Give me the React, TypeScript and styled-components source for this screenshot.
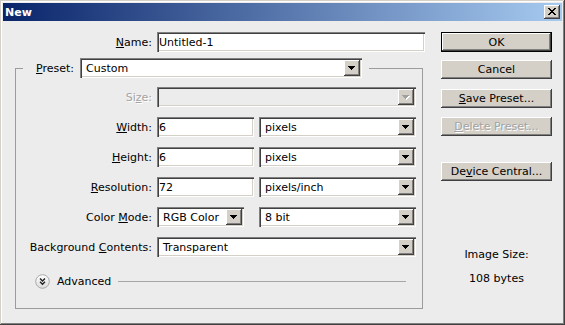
import React from 'react';
import styled, { createGlobalStyle, css } from 'styled-components';

const Global = createGlobalStyle`
  html, body { margin: 0; padding: 0; background: #ececec; }
  body { font-family: "DejaVu Sans", Tahoma, sans-serif; font-size: 11px; color: #000; }
  * { box-sizing: border-box; }
`;

const bevelRaised = css`
  box-shadow: inset -1px -1px #404040, inset 1px 1px #fff, inset -2px -2px #808080, inset 2px 2px #d4d0c8;
`;
const bevelSunken = css`
  box-shadow: inset 1px 1px #808080, inset 2px 2px #404040, inset -1px -1px #fff, inset -2px -2px #d4d0c8;
`;

const Window = styled.div`
  width: 565px;
  height: 325px;
  padding: 3px;
  background: #ececec;
  box-shadow: inset -1px -1px #404040, inset 1px 1px #d4d0c8, inset -2px -2px #808080, inset 2px 2px #fff;
  display: flex;
  flex-direction: column;
`;

const TitleBar = styled.div`
  height: 18px;
  flex: none;
  background: linear-gradient(to right, #0a246a, #a6caf0);
  display: flex;
  align-items: center;
  justify-content: space-between;
  padding: 0 2px 0 2px;
`;

const Title = styled.span`
  color: #fff;
  font-weight: bold;
  font-size: 11px;
`;

const CloseBtn = styled.div`
  width: 16px;
  height: 14px;
  background: #d4d0c8;
  ${bevelRaised};
  display: flex;
  align-items: center;
  justify-content: center;
  padding-bottom: 1px;
`;

const Body = styled.div`
  flex: 1;
  display: flex;
`;

const LeftCol = styled.div`
  width: 427px;
  padding-top: 11px;
  display: flex;
  flex-direction: column;
`;

const NameRow = styled.div`
  display: grid;
  grid-template-columns: 149px 268px;
  column-gap: 5px;
  align-items: center;
`;

const Label = styled.label<{ $disabled?: boolean }>`
  text-align: right;
  white-space: nowrap;
  color: ${p => (p.$disabled ? '#a3a3a3' : '#000')};
  text-shadow: ${p => (p.$disabled ? '1px 1px 0 #fff' : 'none')};
`;

const TextInput = styled.input<{ $w: number }>`
  width: ${p => p.$w}px;
  height: 20px;
  border: none;
  outline: none;
  margin: 0;
  padding: 2px 0 2px 2px;
  font: inherit;
  color: #000;
  background: #fff;
  ${bevelSunken};
`;

const SelectBox = styled.div<{ $w: number; $disabled?: boolean }>`
  width: ${p => p.$w}px;
  height: 20px;
  padding: 2px;
  display: flex;
  align-items: center;
  background: ${p => (p.$disabled ? '#ececec' : '#fff')};
  ${bevelSunken};
`;

const SelectValue = styled.span`
  flex: 1;
  padding-left: 4px;
  white-space: nowrap;
  overflow: hidden;
`;

const DropBtn = styled.span`
  width: 16px;
  height: 16px;
  flex: none;
  background: #d4d0c8;
  ${bevelRaised};
  display: flex;
  align-items: center;
  justify-content: center;
`;

const Group = styled.fieldset`
  margin: 6px 0 0 12px;
  padding: 0 0 19px 0;
  width: 408px;
  min-width: 0;
  border: 1px solid #9c9c9c;
`;

const Legend = styled.legend`
  margin-left: 7px;
  padding: 0 7px 0 13px;
  height: 20px;
`;

const LegendInner = styled.div`
  display: flex;
  align-items: center;
  gap: 6px;
  height: 20px;
`;

const FormGrid = styled.div`
  display: grid;
  grid-template-columns: 136px auto;
  column-gap: 5px;
  row-gap: 10px;
  margin-top: 9px;
  align-items: center;
`;

const Pair = styled.div`
  display: flex;
  justify-content: space-between;
  width: 259px;
`;

const AdvancedRow = styled.div`
  display: flex;
  align-items: center;
  height: 15px;
  margin: 17px 16px 0 19px;
  gap: 7px;
`;

const Rule = styled.div`
  flex: 1;
  height: 1px;
  background: #a6a6a6;
`;

const RightCol = styled.div`
  width: 111px;
  margin-left: 11px;
  padding-top: 11px;
  display: flex;
  flex-direction: column;
`;

const Button = styled.div<{ $default?: boolean; $disabled?: boolean; $mt?: number }>`
  height: ${p => (p.$default ? 20 : 19)}px;
  margin-top: ${p => p.$mt ?? 0}px;
  background: #d4d0c8;
  display: flex;
  align-items: center;
  justify-content: center;
  white-space: nowrap;
  color: ${p => (p.$disabled ? '#a3a3a3' : '#000')};
  text-shadow: ${p => (p.$disabled ? '1px 1px 0 #fff' : 'none')};
  ${bevelRaised};
  ${p =>
    p.$default &&
    css`
      border: 1px solid #000;
    `}
`;

const InfoText = styled.div<{ $mt: number }>`
  margin-top: ${p => p.$mt}px;
  line-height: 13px;
  text-align: center;
`;

const XIcon = () => (
  <svg width="8" height="7" viewBox="0 0 8 7" shapeRendering="crispEdges">
    <path
      fill="#000"
      d="M0 0h2v1H0zM6 0h2v1H6zM1 1h2v1H1zM5 1h2v1H5zM2 2h4v1H2zM3 3h2v1H3zM2 4h4v1H2zM1 5h2v1H1zM5 5h2v1H5zM0 6h2v1H0zM6 6h2v1H6z"
    />
  </svg>
);

const Arrow = ({ disabled }: { disabled?: boolean }) => (
  <svg width="8" height="5" viewBox="0 0 8 5" shapeRendering="crispEdges">
    {disabled && <path fill="#fff" d="M1 1h7v1H1zM2 2h5v1H2zM3 3h3v1H3zM4 4h1v1H4z" />}
    <path
      fill={disabled ? '#a0a0a0' : '#000'}
      d="M0 0h7v1H0zM1 1h5v1H1zM2 2h3v1H2zM3 3h1v1H3z"
    />
  </svg>
);

const AdvIcon = () => (
  <svg width="15" height="15" viewBox="0 0 15 15">
    <defs>
      <linearGradient id="advg" x1="0" y1="0" x2="0" y2="1">
        <stop offset="0" stopColor="#ffffff" />
        <stop offset="1" stopColor="#dcdcdc" />
      </linearGradient>
    </defs>
    <circle cx="7.5" cy="7.5" r="6.8" fill="url(#advg)" stroke="#a9a9a9" strokeWidth="1" />
    <polyline points="5,4.5 7.5,7 10,4.5" fill="none" stroke="#222" strokeWidth="1.4" />
    <polyline points="5,7.8 7.5,10.3 10,7.8" fill="none" stroke="#222" strokeWidth="1.4" />
  </svg>
);

const Select = ({ w, value, disabled }: { w: number; value?: string; disabled?: boolean }) => (
  <SelectBox $w={w} $disabled={disabled}>
    <SelectValue>{value}</SelectValue>
    <DropBtn>
      <Arrow disabled={disabled} />
    </DropBtn>
  </SelectBox>
);

export default function App() {
  return (
    <>
      <Global />
      <Window>
        <TitleBar>
          <Title>New</Title>
          <CloseBtn>
            <XIcon />
          </CloseBtn>
        </TitleBar>
        <Body>
          <LeftCol>
            <NameRow>
              <Label>
                <u>N</u>ame:
              </Label>
              <TextInput $w={268} readOnly defaultValue="Untitled-1" />
            </NameRow>
            <Group>
              <Legend>
                <LegendInner>
                  <Label>
                    <u>P</u>reset:
                  </Label>
                  <Select w={282} value="Custom" />
                </LegendInner>
              </Legend>
              <FormGrid>
                <Label $disabled>
                  Si<u>z</u>e:
                </Label>
                <Select w={259} disabled />

                <Label>
                  <u>W</u>idth:
                </Label>
                <Pair>
                  <TextInput $w={97} readOnly defaultValue="6" />
                  <Select w={157} value="pixels" />
                </Pair>

                <Label>
                  <u>H</u>eight:
                </Label>
                <Pair>
                  <TextInput $w={97} readOnly defaultValue="6" />
                  <Select w={157} value="pixels" />
                </Pair>

                <Label>
                  <u>R</u>esolution:
                </Label>
                <Pair>
                  <TextInput $w={97} readOnly defaultValue="72" />
                  <Select w={157} value="pixels/inch" />
                </Pair>

                <Label>
                  Color <u>M</u>ode:
                </Label>
                <Pair>
                  <Select w={87} value="RGB Color" />
                  <Select w={157} value="8 bit" />
                </Pair>

                <Label>
                  Background <u>C</u>ontents:
                </Label>
                <Select w={259} value="Transparent" />
              </FormGrid>
              <AdvancedRow>
                <AdvIcon />
                <span>Advanced</span>
                <Rule />
              </AdvancedRow>
            </Group>
          </LeftCol>
          <RightCol>
            <Button $default>OK</Button>
            <Button $mt={8}>Cancel</Button>
            <Button $mt={10}>
              <span>
                <u>S</u>ave Preset...
              </span>
            </Button>
            <Button $mt={9} $disabled>
              <span>
                <u>D</u>elete Preset...
              </span>
            </Button>
            <Button $mt={26}>
              <span>
                De<u>v</u>ice Central...
              </span>
            </Button>
            <InfoText $mt={67}>Image Size:</InfoText>
            <InfoText $mt={11}>108 bytes</InfoText>
          </RightCol>
        </Body>
      </Window>
    </>
  );
}
